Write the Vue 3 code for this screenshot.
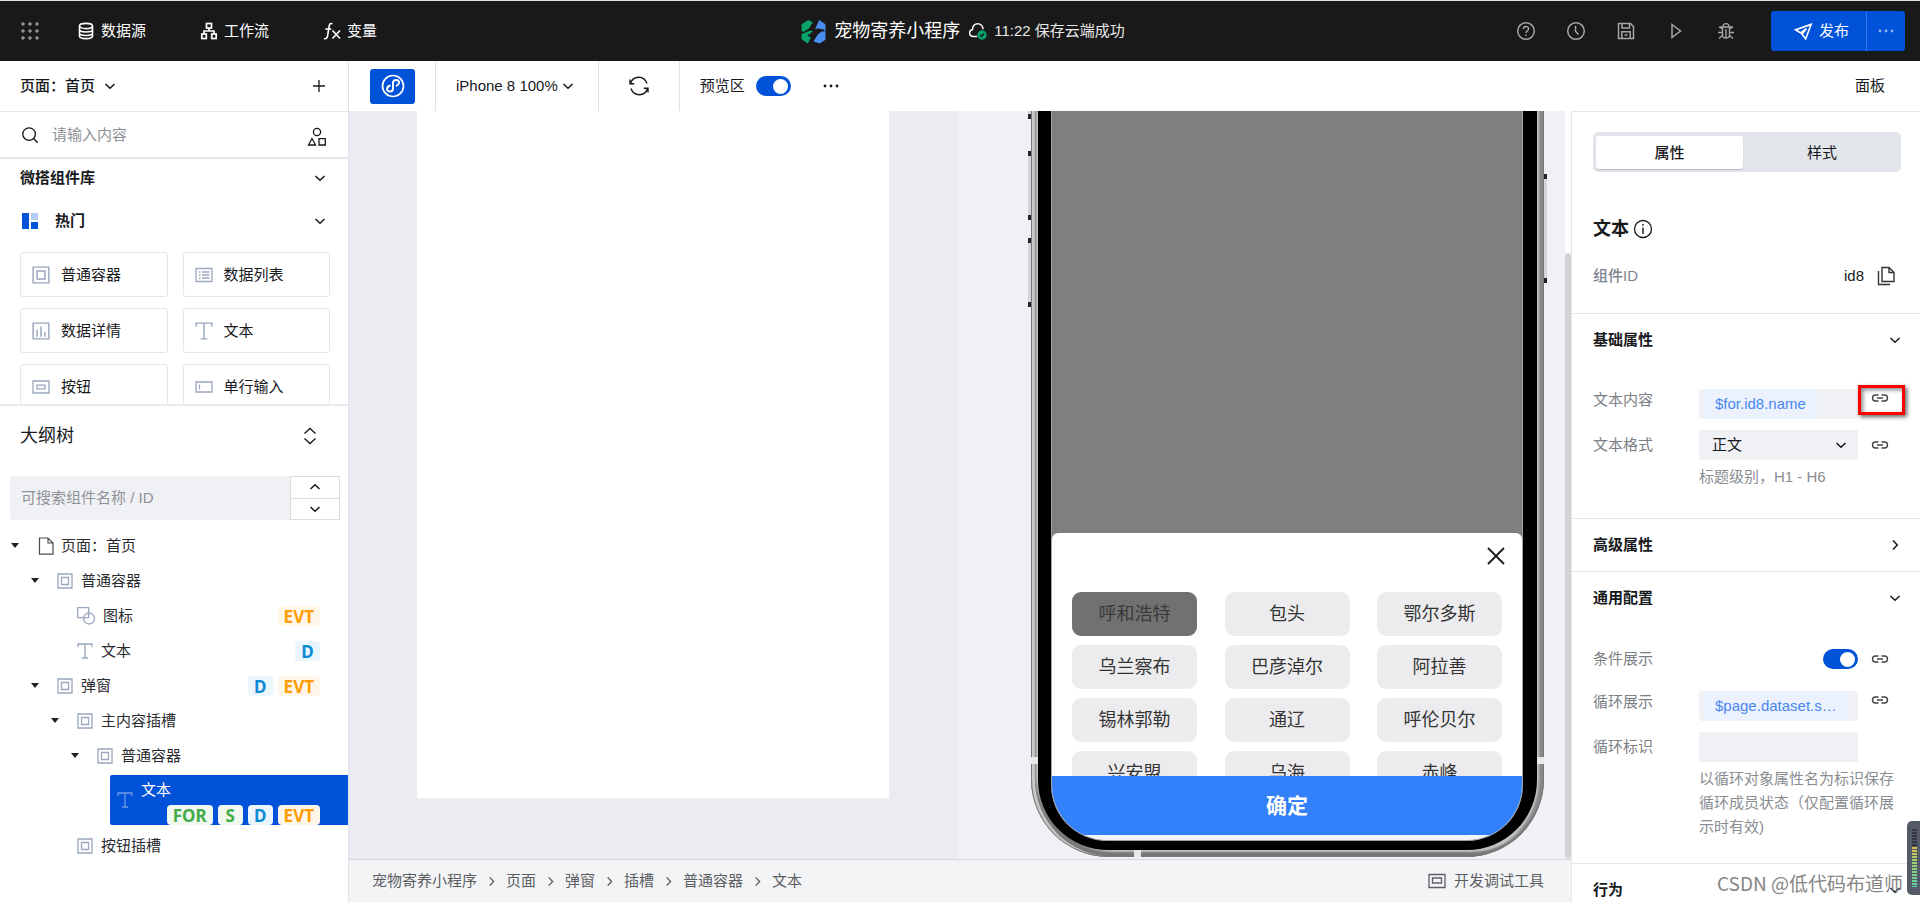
<script setup>
import { h, ref } from 'vue'

const glyphs = {
  grid: [18, '<g fill="currentColor"><circle cx="2" cy="2" r="1.3"/><circle cx="9" cy="2" r="1.3"/><circle cx="16" cy="2" r="1.3"/><circle cx="2" cy="9" r="1.3"/><circle cx="9" cy="9" r="1.3"/><circle cx="16" cy="9" r="1.3"/><circle cx="2" cy="16" r="1.3"/><circle cx="9" cy="16" r="1.3"/><circle cx="16" cy="16" r="1.3"/></g>'],
  database: [18, '<g stroke-width="1.6"><ellipse cx="9" cy="4" rx="6.5" ry="2.6"/><path d="M2.5 4v10c0 1.500 3 2.600 6.500 2.600s6.500-1.100 6.500-2.600V4M2.500 7.500C2.500 9 5.500 10 9 10s6.500-1 6.500-2.500M2.500 11C2.500 12.500 5.500 13.500 9 13.500s6.500-1 6.500-2.500"/></g>'],
  flow: [18, '<g stroke-width="1.7"><rect x="6.500" y="1.500" width="5" height="4.500"/><rect x="1.800" y="12" width="4.500" height="4.500"/><rect x="11.700" y="12" width="4.500" height="4.500"/><path d="M9 6v3M4 12V9h10v3"/></g>'],
  fx: [18, '<g stroke-width="1.6"><path d="M9.500 1.800C7 .8 6.400 2.500 6 5L4.600 13.500C4.200 16 3.200 17.300 1 16.500M2.300 7h6M9.500 8.500l7.500 8M17 8.500l-7.500 8"/></g>'],
  help: [20, '<g stroke-width="1.5"><circle cx="10" cy="10" r="8.300"/><path d="M7.400 8c0-3.400 5.200-3.400 5.200-.2 0 2-2.600 2-2.600 4.200M10 13.500v1.500"/></g>'],
  clock: [20, '<g stroke-width="1.5"><circle cx="10" cy="10" r="8.300"/><path d="M9.500 5v5.300l3 3.200"/></g>'],
  save: [20, '<g stroke-width="1.5"><path d="M2.500 2.500h12l3 3v12h-15zM6 2.500V7h7.500V2.500M5.800 17.500v-6.700h8.400v6.700M8.500 14h3"/></g>'],
  play: [20, '<path stroke-width="1.500" d="M6 3.500l8.500 6.500L6 16.500z"/>'],
  bug: [20, '<g stroke-width="1.400"><path d="M6.500 6h7v8c0 4-7 4-7 0zM7 6c0-4.500 6-4.500 6 0M10 8v9M3 6l3.500 2M17 6l-3.500 2M2 11.500h4.500M13.500 11.500H18M3 17.500l3.500-3M17 17.500l-3.500-3M3.500 6h13"/></g>'],
  plane: [20, '<path stroke-width="1.700" d="M18 2.500L1.800 8.200l5.200 3.300 6-4.500-4.500 5.800 3.800 5z"/>'],
  dots: [20, '<g fill="currentColor" stroke="none"><circle cx="4" cy="10" r="1.400"/><circle cx="10" cy="10" r="1.400"/><circle cx="16" cy="10" r="1.400"/></g>'],
  cloud: [20, '<path stroke-width="1.400" d="M9 15.500H5.500C.500 15.500.500 9.500 4.500 8.500 5 .8 14.500.8 15 8.300"/><circle cx="14" cy="14" r="4.700" fill="#07a36b" stroke="none"/><path stroke="#191919" stroke-width="1.300" d="M12 14l1.500 1.500 2.700-3"/>'],
  logo: [24, '<g stroke="none"><path fill="#07a36b" d="M.5 5L7 1l4.500 2L7.500 9 2.500 12.500.5 11.500zM.5 14.500l8.500-3.500 2.500.5-3 3-2.500 1 3.500 2.500-3 5.500L.5 19.500z"/><path fill="#4a8df0" d="M17.500 1l6 4v7.500l-2-2.500-5-1-3 .5zM23.500 12v8l-5.500 3.500-6-2 4-6.500 3.500-3z"/></g>'],
  down: [12, '<path stroke-width="1.500" d="M1.500 4L6 8.300 10.500 4"/>'],
  up: [12, '<path stroke-width="1.500" d="M1.500 8L6 3.700 10.500 8"/>'],
  right: [12, '<path stroke-width="1.500" d="M4 1.500L8.300 6 4 10.500"/>'],
  plus: [14, '<path stroke-width="1.300" d="M7 1v12M1 7h12"/>'],
  search: [20, '<g stroke-width="1.500"><circle cx="9" cy="9" r="7"/><path d="M14 14l4.500 4.500"/></g>'],
  shapes: [20, '<g stroke-width="1.300"><circle cx="10" cy="5" r="3.600"/><path d="M5 11.500L1.500 18h7zM12 11.700h6.300V18H12z"/></g>'],
  hot: [18, '<g stroke="none"><path fill="#0052d9" d="M2 1h7v16H2zM11 10h7v7h-7z"/><path fill="#b5ccf8" d="M11 1h7v7h-7z"/></g>'],
  box: [16, '<path stroke-width="1.300" d="M1 1h14v14H1zM4.500 4.500h7v7h-7z"/>'],
  list: [18, '<path stroke-width="1.300" d="M1 2.500h16v13H1zM4 6h1.500M7 6h7.500M4 9h1.500M7 9h7.500M4 12h1.500M7 12h7.500"/>'],
  chart: [16, '<path stroke-width="1.300" d="M1 1h14v14H1zM4.500 7v6M8 4v9M11.500 9v4"/>'],
  text: [16, '<path stroke-width="1.300" d="M1 4V1h14v3M8 1v14M5 15h6"/>'],
  button: [18, '<path stroke-width="1.300" d="M1 3h16v12H1zM5 7.200h8v3.600H5z"/>'],
  input: [18, '<path stroke-width="1.300" d="M1 4h16v10H1zM4.500 6.500v5"/>'],
  file: [18, '<path stroke-width="1.200" d="M2.500 1h8.500l5 5v11.200H2.500zM11 1v5h5"/>'],
  shape: [18, '<g stroke-width="1.300"><path d="M.700.700h11v10h-11z"/><circle cx="12" cy="11.500" r="5.500"/></g>'],
  updown: [18, '<path stroke-width="1.400" d="M3.500 6.500L9 1.500l5.500 5M3.500 11.500L9 16.500l5.500-5"/>'],
  mini: [26, '<g stroke-width="1.700"><circle cx="13" cy="13" r="10.500"/><path stroke-width="2" d="M10.500 12.500c-4.500 1-4.500 6-.5 6 2 0 3-1.300 3-3V10c0-4 6.500-4 6 0-.2 1.500-1.300 2.300-3 3"/></g>'],
  refresh: [20, '<path stroke-width="1.400" d="M1.500 7.500C4-.500 15-1 18 7.500M1 3.500v4.300h4.300M18.500 12.500C16 20.500 5 21 2 12.500M19 16.500v-4.300h-4.300"/>'],
  info: [20, '<circle cx="10" cy="10" r="8.500" stroke-width="1.300"/><path stroke-width="1.400" d="M10 8.500V15M10 5v1.700"/>'],
  copy: [20, '<path stroke-width="1.400" d="M6 1.500h7l5 5v9H6zM13 1.500v5h5M2.500 5v13.500h11.500"/>'],
  link: [18, '<path stroke-width="1.400" d="M7.500 12H4.500a3 3 0 0 1 0-6h3M10.500 6h3a3 3 0 0 1 0 6h-3M6 9h6"/>'],
  close: [20, '<path stroke-width="2" d="M2 2l16 16M18 2L2 18"/>'],
  screen: [18, '<path stroke-width="1.300" d="M1 2.500h16v13H1zM4.500 6h9v5h-9z"/>'],
}
const Icon = (props) =>
  h('svg', {
    width: props.size,
    height: props.size,
    viewBox: `0 0 ${glyphs[props.name][0]} ${glyphs[props.name][0]}`,
    fill: 'none',
    stroke: 'currentColor',
    'aria-hidden': 'true',
    innerHTML: glyphs[props.name][1],
  })
Icon.props = ['name', 'size']

const nav = [
  { icon: 'database', label: '数据源' },
  { icon: 'flow', label: '工作流' },
  { icon: 'fx', label: '变量' },
]
const tools = [
  ['help', '帮助'], ['clock', '历史'], ['save', '保存'], ['play', '预览'], ['bug', '调试'],
]
const widgets = [
  { icon: 'box', label: '普通容器' },
  { icon: 'list', label: '数据列表' },
  { icon: 'chart', label: '数据详情' },
  { icon: 'text', label: '文本' },
  { icon: 'button', label: '按钮' },
  { icon: 'input', label: '单行输入' },
]
const tree = [
  { level: 0, open: true, icon: 'file', label: '页面：首页', tags: [] },
  { level: 1, open: true, icon: 'box', label: '普通容器', tags: [] },
  { level: 2, icon: 'shape', label: '图标', tags: ['EVT'] },
  { level: 2, icon: 'text', label: '文本', tags: ['D'] },
  { level: 1, open: true, icon: 'box', label: '弹窗', tags: ['D', 'EVT'] },
  { level: 2, open: true, icon: 'box', label: '主内容插槽', tags: [] },
  { level: 3, open: true, icon: 'box', label: '普通容器', tags: [] },
  { level: 4, icon: 'text', label: '文本', tags: ['FOR', 'S', 'D', 'EVT'], selected: true },
  { level: 2, icon: 'box', label: '按钮插槽', tags: [] },
]
const cities = ['呼和浩特', '包头', '鄂尔多斯', '乌兰察布', '巴彦淖尔', '阿拉善', '锡林郭勒', '通辽', '呼伦贝尔', '兴安盟', '乌海', '赤峰']
const crumbs = ['宠物寄养小程序', '页面', '弹窗', '插槽', '普通容器', '文本']
const preview = ref(true)
const visible = ref(true)
</script>

<template>
  <div class="app">
    <header class="topbar">
      <nav class="nav">
        <button class="apps" aria-label="应用"><Icon name="grid" :size="18" /></button>
        <a v-for="n in nav" :key="n.label" href="#" class="nav-link"><Icon :name="n.icon" :size="18" />{{ n.label }}</a>
      </nav>
      <div class="project">
        <Icon name="logo" :size="25" />
        <span class="project-name">宠物寄养小程序</span>
        <Icon name="cloud" :size="20" />
        <span class="saved">11:22 保存云端成功</span>
      </div>
      <div class="actions">
        <button v-for="t in tools" :key="t[0]" class="tool" :aria-label="t[1]"><Icon :name="t[0]" :size="20" /></button>
        <div class="publish">
          <button class="publish-main"><Icon name="plane" :size="19" />发布</button>
          <button class="publish-more" aria-label="更多"><Icon name="dots" :size="20" /></button>
        </div>
      </div>
    </header>

    <div class="body">
      <aside class="left">
        <div class="page-head">
          <button class="page-pick">页面：首页<Icon name="down" :size="12" /></button>
          <button aria-label="新增页面"><Icon name="plus" :size="14" /></button>
        </div>
        <div class="find">
          <Icon name="search" :size="18" />
          <input type="text" placeholder="请输入内容" aria-label="搜索组件" />
          <Icon class="shapes" name="shapes" :size="20" />
        </div>
        <section class="library">
          <button class="lib-head">微搭组件库<Icon name="down" :size="12" /></button>
          <button class="lib-group"><Icon name="hot" :size="18" /><span>热门</span><Icon name="down" :size="12" /></button>
          <div class="cards">
            <button v-for="w in widgets" :key="w.label" class="card"><Icon :name="w.icon" :size="18" />{{ w.label }}</button>
          </div>
        </section>
        <section class="outline">
          <div class="outline-head"><h2>大纲树</h2><button aria-label="展开"><Icon name="updown" :size="18" /></button></div>
          <div class="outline-find">
            <input type="text" placeholder="可搜索组件名称 / ID" aria-label="搜索大纲" />
            <div class="stepper">
              <button aria-label="上一个"><Icon name="up" :size="12" /></button>
              <button aria-label="下一个"><Icon name="down" :size="12" /></button>
            </div>
          </div>
          <ul class="tree">
            <li v-for="(n, i) in tree" :key="i" :class="['node', 'level-' + n.level, { selected: n.selected }]">
              <span v-if="!n.selected" :class="['caret', { open: n.open }]"></span>
              <Icon class="node-icon" :name="n.icon" :size="n.icon === 'file' || n.icon === 'shape' ? 18 : 16" />
              <span class="node-label">{{ n.label }}</span>
              <span class="tags"><b v-for="t in n.tags" :key="t" :class="['tag', 'tag-' + t.toLowerCase()]">{{ t }}</b></span>
            </li>
          </ul>
        </section>
      </aside>

      <main class="work">
        <div class="toolbar">
          <div class="cell first"><button class="mini" aria-label="小程序"><Icon name="mini" :size="26" /></button></div>
          <div class="cell device"><button>iPhone 8 100%<Icon name="down" :size="12" /></button></div>
          <div class="cell reload"><button aria-label="刷新"><Icon name="refresh" :size="20" /></button></div>
          <div class="cell last">
            <label class="switch-label">预览区<input v-model="preview" class="switch" type="checkbox" /></label>
            <button aria-label="更多"><Icon name="dots" :size="20" /></button>
          </div>
          <button class="panel-btn">面板</button>
        </div>
        <div class="stage">
          <div class="center">
            <div class="canvas">
              <div class="edit"><div class="sheet-page"></div></div>
              <div class="preview">
                <div class="phone">
                  <i class="key key-a"></i><i class="key key-b"></i><i class="key key-c"></i><i class="key key-d"></i>
                  <i class="band band-l"></i><i class="band band-r"></i><i class="band band-b"></i>
                  <div class="bezel">
                    <div class="screen">
                      <div class="mask"></div>
                      <div class="popup">
                        <div class="popup-head"><button aria-label="关闭"><Icon name="close" :size="20" /></button></div>
                        <div class="cities">
                          <button v-for="(c, i) in cities" :key="c" :class="['city', { picked: i === 0 }]">{{ c }}</button>
                        </div>
                      </div>
                      <button class="confirm">确定</button>
                    </div>
                  </div>
                </div>
              </div>
              <div class="scroll"><div class="thumb"></div></div>
            </div>
            <footer class="crumbs">
              <template v-for="(c, i) in crumbs" :key="c">
                <Icon v-if="i" name="right" :size="11" /><a href="#">{{ c }}</a>
              </template>
              <button class="debug"><Icon name="screen" :size="18" />开发调试工具</button>
            </footer>
          </div>

          <aside class="right">
            <section class="summary">
              <div class="tabs"><button class="tab on">属性</button><button class="tab">样式</button></div>
              <h1>文本<Icon name="info" :size="20" /></h1>
              <div class="idrow"><span>组件ID</span><span class="idval">id8</span><button aria-label="复制"><Icon name="copy" :size="20" /></button></div>
            </section>
            <section class="group basic">
              <button class="group-head">基础属性<Icon name="down" :size="12" /></button>
              <div class="row top">
                <label for="content">文本内容</label>
                <button id="content" class="field"><span class="expr">$for.id8.name</span></button>
                <button class="link" aria-label="绑定文本内容"><Icon name="link" :size="18" /></button>
                <i class="marker"></i>
              </div>
              <div class="row">
                <label for="format">文本格式</label>
                <div class="field select">
                  <select id="format"><option>正文</option></select>
                  <Icon name="down" :size="12" />
                </div>
                <button class="link" aria-label="绑定文本格式"><Icon name="link" :size="18" /></button>
              </div>
              <p class="hint">标题级别，H1 - H6</p>
            </section>
            <section class="group"><button class="group-head">高级属性<Icon name="right" :size="12" /></button></section>
            <section class="group general">
              <button class="group-head">通用配置<Icon name="down" :size="12" /></button>
              <div class="row">
                <label for="cond">条件展示</label>
                <div class="field bare"><input id="cond" v-model="visible" class="switch" type="checkbox" /></div>
                <button class="link" aria-label="绑定条件展示"><Icon name="link" :size="18" /></button>
              </div>
              <div class="row top loop">
                <label for="loop">循环展示</label>
                <button id="loop" class="field"><span class="expr">$page.dataset.s…</span></button>
                <button class="link" aria-label="绑定循环展示"><Icon name="link" :size="18" /></button>
              </div>
              <div class="row">
                <label for="key">循环标识</label>
                <input id="key" class="field text" type="text" />
                <span class="link"></span>
              </div>
              <p class="hint">以循环对象属性名为标识保存循环成员状态（仅配置循环展示时有效)</p>
            </section>
            <section class="group"><button class="group-head">行为<Icon name="down" :size="12" /></button></section>
          </aside>
        </div>
      </main>
    </div>
    <div class="watermark">CSDN @低代码布道师</div>
    <div class="meter"><i></i></div>
  </div>
</template>

<style>
body { margin: 0; }
</style>

<style scoped>
.app, .app * { box-sizing: border-box; }
.app {
  height: 100vh;
  display: flex;
  flex-direction: column;
  position: relative;
  overflow: hidden;
  background: #fff;
  color: #17191c;
  font: 15px/22px "Liberation Sans", "Noto Sans CJK SC", sans-serif;
}
svg { display: block; flex: none; }
button, input, select { font: inherit; color: inherit; border: 0; background: none; padding: 0; margin: 0; outline: 0; border-radius: 0; }
button { display: flex; align-items: center; white-space: nowrap; }
a { color: inherit; text-decoration: none; }
h1, h2, p, ul { margin: 0; padding: 0; list-style: none; }
input::placeholder { color: #8f9297; opacity: 1; }

.topbar {
  flex: none;
  height: 61px;
  border-top: 1px solid #dfe3e0;
  background: #191919;
  color: #fff;
  display: grid;
  grid-template-columns: 1fr auto 1fr;
  align-items: center;
  padding: 0 15px 0 21px;
}
.nav { display: flex; align-items: center; gap: 54px; }
.apps { color: #8e8e8e; margin-right: -16px; }
.nav-link { display: flex; align-items: center; gap: 6px; }
.project { display: flex; align-items: center; }
.project-name { font-size: 18px; margin: 0 8px; }
.saved { margin-left: 6px; color: #e8e8e8; }
.actions { display: flex; align-items: center; justify-content: flex-end; gap: 30px; color: #a5a5a5; }
.publish { display: flex; height: 40px; margin-left: 5px; background: #0052d9; border-radius: 3px; color: #fff; }
.publish-main { gap: 6px; padding: 0 17px 0 23px; }
.publish-more { border-left: 1px solid #3375e1; padding: 0 9px; color: #8fb4ef; }

.body { flex: 1; min-height: 0; display: flex; }
.left { flex: none; width: 349px; border-right: 1px solid #dfe1e8; display: flex; flex-direction: column; min-height: 0; }
.page-head { flex: none; height: 51px; border-bottom: 1px solid #e3e6eb; display: flex; align-items: center; justify-content: space-between; padding: 0 22px 0 20px; }
.page-pick { font-weight: 500; gap: 9px; }
.find { flex: none; height: 47px; border-bottom: 2px solid #e3e6eb; display: flex; align-items: center; padding: 0 21px; }
.find input { flex: 1; min-width: 0; margin-left: 13px; }
.find .shapes { margin-top: 4px; }
.library { flex: none; height: 247px; overflow: hidden; border-bottom: 2px solid #e9eaee; }
.lib-head, .lib-group { width: 100%; padding: 0 22px 0 20px; font-weight: 700; justify-content: space-between; }
.lib-head { height: 38px; }
.lib-group { height: 48px; }
.lib-group span { flex: 1; text-align: left; padding-left: 17px; }
.cards { display: grid; grid-template-columns: 1fr 1fr; gap: 11px 15px; padding: 7px 18px 0 20px; }
.card { height: 45px; border: 1px solid #e3e6eb; border-radius: 3px; padding-left: 11px; gap: 11px; }
.card svg { color: #9aa7bf; }

.outline { flex: 1; min-height: 0; overflow: hidden; }
.outline-head { height: 60px; display: flex; align-items: center; justify-content: space-between; padding: 0 29px 0 20px; }
h2 { font-size: 18px; font-weight: 400; }
.outline-find { display: flex; height: 44px; margin: 10px 8px 8px 10px; }
.outline-find input { flex: 1; min-width: 0; background: #f0f1f5; border-radius: 3px 0 0 3px; padding: 0 11px; }
.stepper { width: 50px; border: 1px solid #dcdcdc; display: flex; flex-direction: column; }
.stepper button { flex: 1; justify-content: center; }
.stepper button + button { border-top: 1px solid #dcdcdc; }

.node { height: 35px; display: flex; align-items: center; padding: 0 28px 0 11px; color: #2a2c30; }
.level-1 { padding-left: 31px; }
.level-2 { padding-left: 51px; }
.level-3 { padding-left: 71px; }
.caret { width: 8px; height: 5px; margin-right: 18px; }
.caret.open { background: #222; clip-path: polygon(0 0, 100% 0, 50% 100%); }
.node-icon { color: #9aa7bf; }
.level-0 .node-icon { color: #4a4c50; }
.node-label { margin-left: 8px; }
.level-0 .node-label { margin-left: 6px; }
.tags { margin-left: auto; display: flex; gap: 5px; }
.tag { height: 20px; padding: 0 6px; border-radius: 4px; font: 700 17px/22px "Noto Sans", sans-serif; text-align: center; }
.tag-evt { background: #fff6ea; color: #ff9d00; }
.tag-d { background: #eaf5fc; color: #0a8ad4; min-width: 25px; }
.tag-for, .tag-s { background: #f0f8f0; color: #43ac4a; }
.tag-s { min-width: 25px; }
.node.selected { height: 50px; margin: 2px 0 3px 110px; padding-left: 7px; background: #0052d9; color: #fff; border-radius: 2px 0 0 2px; display: grid; grid-template-columns: 16px 1fr; grid-template-rows: 30px 20px; }
.selected .node-icon { grid-column: 1; grid-row: 1 / 3; color: #6f9be6; }
.selected .node-label { grid-column: 2; grid-row: 1; }
.selected .tags { grid-column: 1 / 3; grid-row: 2; }

.work { flex: 1; min-width: 0; display: flex; flex-direction: column; }
.toolbar { flex: none; height: 50px; display: flex; }
.cell { display: flex; align-items: center; border-right: 1px solid #dfe1e8; }
.first { padding: 0 20px 0 21px; }
.mini { width: 45px; height: 35px; justify-content: center; border-radius: 3px; background: #0052d9; color: #fff; }
.device { padding: 0 24px 0 20px; }
.device button { gap: 4px; }
.reload { padding: 0 30px; }
.last { border: 0; padding-left: 20px; gap: 30px; }
.switch-label { display: flex; align-items: center; gap: 11px; }
.switch { appearance: none; width: 35px; height: 20px; border-radius: 10px; background: #0052d9; display: flex; align-items: center; justify-content: flex-end; padding: 0 3px; }
.switch::after { content: ""; width: 15px; height: 15px; border-radius: 50%; background: #fff; }
.switch:not(:checked) { justify-content: flex-start; background: #b9bdc6; }
.panel-btn { margin-left: auto; padding-right: 35px; }

.stage { flex: 1; min-height: 0; display: flex; }
.center { flex: 1; min-width: 0; display: flex; flex-direction: column; }
.canvas { flex: 1; min-height: 0; display: grid; grid-template-columns: minmax(0, 1fr) minmax(0, 1fr) 6px; grid-template-rows: minmax(0, 1fr); }
.edit { background: #ebecf1; padding: 0 68px 61px; display: flex; }
.sheet-page { flex: 1; background: #fff; }
.preview { background: #f0f1f6; overflow: hidden; padding: 0 21px 2px 74px; }
.scroll { padding-top: 142px; display: flex; }
.thumb { flex: 1; border-radius: 3px; background: #d3d3d3; }

.phone { position: relative; height: 100%; padding: 0 7px 7px; border-radius: 0 0 78px 78px; background: #c2c2c2; box-shadow: inset 1px 0 #777, inset -1px -1px #777, inset 4px 0 1px #c9c9c9, inset 5px -5px 2px #777, inset -5px 0 2px #888; }
.bezel { height: 100%; padding: 0 14px 9px 13px; background: #000; border-radius: 0 0 70px 70px; }
.screen { height: 100%; display: flex; flex-direction: column; overflow: hidden; border: 1px solid #a0a1a6; border-top: 0; border-radius: 0 0 56px 56px; background: #f3f5fa; padding-bottom: 5px; }
.mask { flex: 1; background: #7f7f7f; }
.popup { flex: none; height: 243px; overflow: hidden; background: #fff; border-radius: 6px 6px 0 0; box-shadow: 0 -8px 0 8px #7f7f7f; clip-path: inset(-8px 0 0 0); }
.popup-head { height: 59px; display: flex; align-items: center; justify-content: flex-end; padding: 0 16px 14px; color: #222; }
.cities { display: grid; grid-template-columns: repeat(3, 125px); justify-content: space-between; row-gap: 9px; padding: 0 20px; }
.city { height: 44px; justify-content: center; border-radius: 9px; background: #ececee; color: #333; font-size: 18px; }
.picked { background: #717171; color: #3a3a3a; }
.confirm { flex: none; height: 59px; justify-content: center; background: #3281fa; color: #fff; font-size: 21px; font-weight: 700; z-index: 1; }
.key { position: absolute; width: 3px; border: solid #222; border-width: 5px 0; background: #d6d6d8; }
.key-a { left: -3px; top: -12px; height: 20px; }
.key-b { left: -3px; top: 40px; height: 69px; }
.key-c { left: -3px; top: 127px; height: 69px; }
.key-d { right: -3px; top: 63px; height: 109px; }
.band { position: absolute; background: #e8e8e8; }
.band-l { left: 0; bottom: 93px; width: 7px; height: 7px; }
.band-r { right: 0; bottom: 93px; width: 7px; height: 7px; }
.band-b { left: 103px; bottom: 0; width: 7px; height: 7px; }

.crumbs { flex: none; height: 43px; border-top: 1px solid #d5d8e0; background: #f3f4f6; color: #5c5e62; display: flex; align-items: center; gap: 9px; padding: 0 27px 0 23px; white-space: nowrap; }
.debug { margin-left: auto; gap: 8px; }

.right { flex: none; width: 349px; border: solid #e3e6eb; border-width: 1px 0 0 1px; overflow: hidden; }
.summary { padding: 20px 19px 22px 21px; }
.tabs { height: 40px; display: flex; padding: 4px 0 3px 3px; background: #e2e5ea; border-radius: 5px; }
.tab { flex: 1; justify-content: center; border-radius: 3px; }
.tab:last-child { flex: 0 0 158px; }
.on { background: #fff; font-weight: 500; box-shadow: 0 1px 1px #b9bdc6; }
h1 { font-size: 18px; line-height: 30px; margin: 42px 0 17px; display: flex; align-items: center; gap: 4px; }
.idrow { display: flex; align-items: center; height: 30px; color: #7c8490; font-weight: 500; }
.idval { margin-left: auto; margin-right: 12px; color: #17191c; font-weight: 400; }
.idrow button { color: #333; margin-right: 5px; }
.group { border-top: 1px solid #e3e6eb; padding: 0 19px 0 21px; }
.group-head { width: 100%; height: 52px; justify-content: space-between; font-weight: 700; }
.basic { padding-bottom: 29px; }
.general { padding-bottom: 24px; }
.row { position: relative; display: flex; align-items: center; margin-bottom: 11px; }
.top { align-items: flex-start; }
.basic .row.top { margin-top: 23px; }
.general .group-head { margin-bottom: 20px; }
.loop { margin-top: 17px; }
.row label { width: 106px; color: #7c8085; }
.field { flex: 1; min-width: 0; height: 30px; background: #f0f1f5; border-radius: 3px; padding: 0 5px; }
.expr { height: 30px; line-height: 29px; padding: 0 11px; background: #ebf2fe; color: #4a86ef; }
.select { position: relative; display: flex; align-items: center; padding: 0 11px 0 13px; border-radius: 0; }
.select select { flex: 1; appearance: none; }
.text { border-radius: 0; }
.bare { background: none; display: flex; align-items: center; justify-content: flex-end; padding: 0; }
.link { width: 18px; margin: 0 12px 0 13px; color: #444; }
.marker { position: absolute; right: -4px; top: -4px; width: 47px; height: 30px; border: 3px solid #f00; box-shadow: 2px 2px 4px #666, inset 2px 2px 4px #888; }
.hint { margin: -6px 7px 0 106px; line-height: 24px; color: #8a8d92; }

.watermark { position: absolute; right: 17px; bottom: 5px; color: #858585; font: 19px/28px "Noto Sans CJK SC", sans-serif; white-space: nowrap; }
.meter { position: absolute; right: 0; bottom: 7px; width: 13px; height: 74px; border-radius: 5px 0 0 5px; background: #555a69; padding: 8px 3px 8px 5px; }
.meter i { display: block; height: 58px; background: repeating-linear-gradient(transparent 0 2px, #555a69 2px 3px), linear-gradient(#33363f 0 18px, #d9c04a 18px, #a0cf72 34px, #5ed3a8); }
</style>
